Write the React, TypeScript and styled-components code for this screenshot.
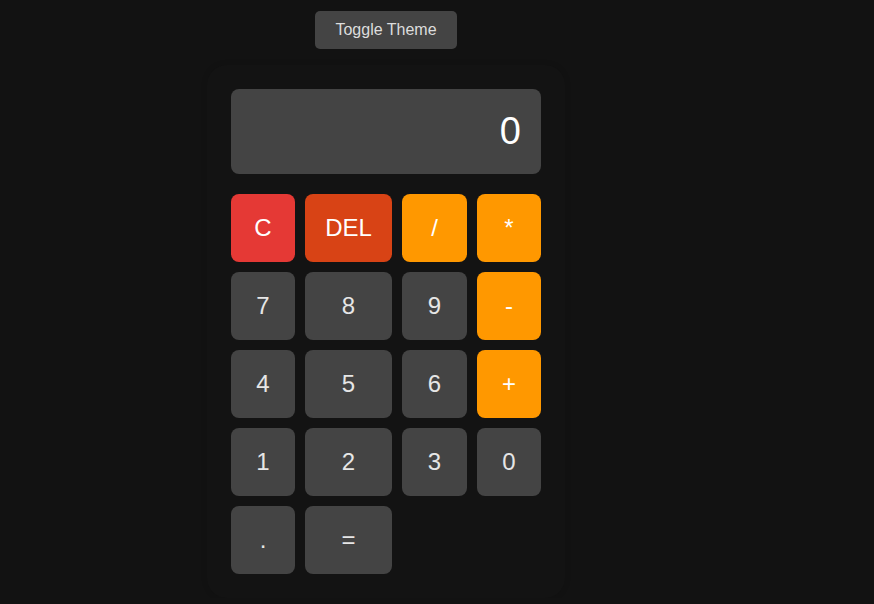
import React, { useState } from "react";
import styled, { createGlobalStyle } from "styled-components";

const Global = createGlobalStyle`
  html, body { margin: 0; padding: 0; background: #121212; }
  body { font-family: "Liberation Sans", Arial, sans-serif; }
`;

const Page = styled.div`
  width: 772px;
  display: flex;
  flex-direction: column;
  align-items: center;
  padding-top: 11px;
`;

const ToggleButton = styled.button`
  width: 142px;
  height: 38px;
  border: none;
  border-radius: 5px;
  background: #444444;
  color: #dddddd;
  font-family: "Liberation Sans", Arial, sans-serif;
  font-size: 16px;
  cursor: pointer;
`;

const Calculator = styled.div`
  margin-top: 16px;
  width: 310px;
  padding: 24px;
  border-radius: 20px;
  background: #131313;
  box-shadow: 0 0 6px rgba(0, 0, 0, 0.12);
`;

const Display = styled.div`
  height: 85px;
  box-sizing: border-box;
  border-radius: 8px;
  background: #444444;
  color: #ffffff;
  font-size: 38px;
  display: flex;
  align-items: center;
  justify-content: flex-end;
  padding: 0 20px;
  margin-bottom: 20px;
`;

const Keys = styled.div`
  display: grid;
  grid-template-columns: 64px 87px 65px 64px;
  grid-auto-rows: 68px;
  gap: 10px;
`;

type Kind = "num" | "op" | "clear" | "del";

const colors: Record<Kind, { bg: string; fg: string }> = {
  num: { bg: "#444444", fg: "#e6e6e6" },
  op: { bg: "#ff9800", fg: "#ffffff" },
  clear: { bg: "#e53935", fg: "#ffffff" },
  del: { bg: "#d84315", fg: "#ffffff" },
};

const Key = styled.button<{ $kind: Kind }>`
  border: none;
  border-radius: 8px;
  background: ${(p) => colors[p.$kind].bg};
  color: ${(p) => colors[p.$kind].fg};
  font-family: "Liberation Sans", Arial, sans-serif;
  font-size: 24px;
  padding: 0;
  cursor: pointer;
`;

const keys: { label: string; kind: Kind }[] = [
  { label: "C", kind: "clear" },
  { label: "DEL", kind: "del" },
  { label: "/", kind: "op" },
  { label: "*", kind: "op" },
  { label: "7", kind: "num" },
  { label: "8", kind: "num" },
  { label: "9", kind: "num" },
  { label: "-", kind: "op" },
  { label: "4", kind: "num" },
  { label: "5", kind: "num" },
  { label: "6", kind: "num" },
  { label: "+", kind: "op" },
  { label: "1", kind: "num" },
  { label: "2", kind: "num" },
  { label: "3", kind: "num" },
  { label: "0", kind: "num" },
  { label: ".", kind: "num" },
  { label: "=", kind: "num" },
];

export default function App() {
  const [value] = useState("0");
  return (
    <>
      <Global />
      <Page>
        <ToggleButton>Toggle Theme</ToggleButton>
        <Calculator>
          <Display>{value}</Display>
          <Keys>
            {keys.map((k) => (
              <Key key={k.label} $kind={k.kind}>
                {k.label}
              </Key>
            ))}
          </Keys>
        </Calculator>
      </Page>
    </>
  );
}
